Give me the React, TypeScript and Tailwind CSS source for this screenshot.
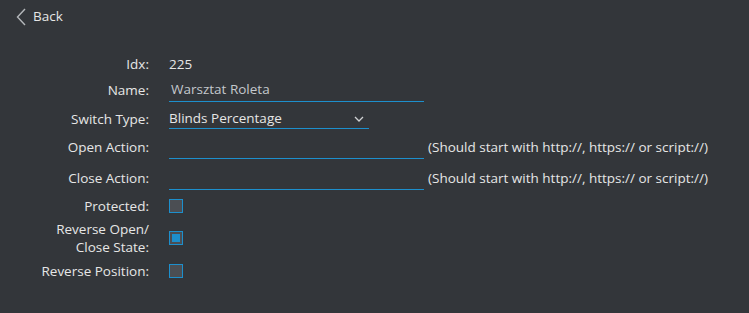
import React from 'react';

function Label({ children }: { children: React.ReactNode }) {
  return <div className="w-[149px] shrink-0 text-right leading-[18px]">{children}</div>;
}

function Checkbox({ checked }: { checked?: boolean }) {
  return (
    <div className="w-[14px] h-[14px] border border-[#1d8fcc] bg-[#4b4e53] flex items-center justify-center">
      {checked && <div className="w-[8px] h-[8px] bg-[#1d8fcc]" />}
    </div>
  );
}

function TextInput({ value, width }: { value?: string; width: number }) {
  return (
    <div
      className="h-6 border-b border-[#1d8fcc] flex items-center px-[2px] text-[#c4c8cc]"
      style={{ width }}
    >
      {value}
    </div>
  );
}

export default function App() {
  const hint = '(Should start with http://, https:// or script://)';
  return (
    <div
      className="w-[749px] h-[313px] bg-[#33363a] text-[#e6e6e6] text-[13.5px] overflow-hidden"
      style={{ fontFamily: '"Open Sans", "Noto Sans", sans-serif' }}
    >
      <div className="flex items-center h-8 pl-[16px] pt-[1px]">
        <svg width="11" height="18" viewBox="0 0 11 18" className="mr-[6px]">
          <path d="M9 1 L1.5 9 L9 17" fill="none" stroke="#b4b7ba" strokeWidth="1.4" />
        </svg>
        <span>Back</span>
      </div>

      <div className="mt-[22px] flex flex-col">
        <div className="flex items-center h-5 gap-5">
          <Label>Idx:</Label>
          <span>225</span>
        </div>
        <div className="flex items-center h-6 gap-5 mt-[4px]">
          <Label>Name:</Label>
          <TextInput value="Warsztat Roleta" width={255} />
        </div>
        <div className="flex items-center h-5 gap-5 mt-[7px]">
          <Label>Switch Type:</Label>
          <div className="w-[200px] h-5 border-b border-[#1d8fcc] flex items-center justify-between">
            <span>Blinds Percentage</span>
            <svg width="10" height="6" viewBox="0 0 10 6" className="mr-[5px] mt-[1px]">
              <path d="M1 1 L5 5 L9 1" fill="none" stroke="#d0d2d4" strokeWidth="1.3" />
            </svg>
          </div>
        </div>
        <div className="flex items-center h-6 gap-5 mt-[6px]">
          <Label>Open Action:</Label>
          <div className="flex items-center">
            <TextInput width={255} />
            <span className="ml-[4px]">{hint}</span>
          </div>
        </div>
        <div className="flex items-center h-6 gap-5 mt-[7px]">
          <Label>Close Action:</Label>
          <div className="flex items-center">
            <TextInput width={255} />
            <span className="ml-[4px]">{hint}</span>
          </div>
        </div>
        <div className="flex items-center h-5 gap-5 mt-[6px]">
          <Label>Protected:</Label>
          <Checkbox />
        </div>
        <div className="flex items-center h-9 gap-5 mt-[4px]">
          <Label>
            Reverse Open/
            <br />
            Close State:
          </Label>
          <Checkbox checked />
        </div>
        <div className="flex items-center h-5 gap-5 mt-[5px]">
          <Label>Reverse Position:</Label>
          <Checkbox />
        </div>
      </div>
    </div>
  );
}
